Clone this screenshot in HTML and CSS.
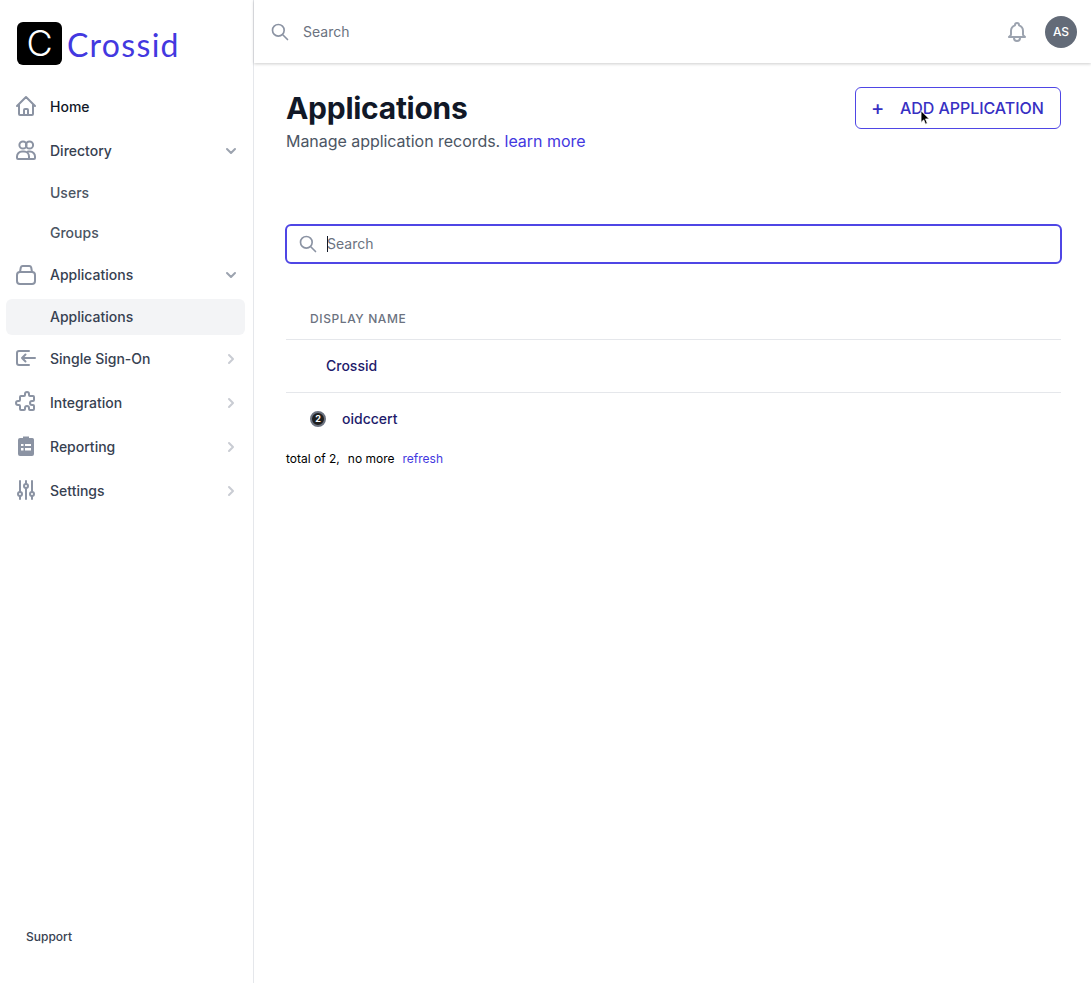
FILE: index.html
```html
<!DOCTYPE html>
<html lang="en">

<head>
    <meta charset="UTF-8">
    <meta name="viewport" content="width=device-width, initial-scale=1.0">
    <title>Applications</title>
    <link rel="stylesheet" href="styles.css">
</head>

<body>
    <!-- Sidebar -->
    <aside class="sidebar">
        <div class="brand">
            <div class="brand-mark">C</div>
            <div class="brand-name">Crossid</div>
        </div>

        <nav class="nav">
            <a class="nav-item active">
                <svg class="nav-icon" viewBox="0 0 24 24"><path d="M3 12l2-2m0 0l7-7 7 7M5 10v10a1 1 0 001 1h3m10-11l2 2m-2-2v10a1 1 0 01-1 1h-3m-6 0a1 1 0 001-1v-4a1 1 0 011-1h2a1 1 0 011 1v4a1 1 0 001 1m-6 0h6"/></svg>
                Home
            </a>
            <a class="nav-item">
                <svg class="nav-icon" viewBox="0 0 24 24"><circle cx="9" cy="7" r="3.6"/><circle cx="15.5" cy="7" r="3.6"/><path d="M3 20v-1.500a5 5 0 015-5h2a5 5 0 015 5V20a1 1 0 01-1 1H4a1 1 0 01-1-1zM14 13.500h2a5 5 0 015 5V20a1 1 0 01-1 1h-6"/></svg>
                Directory
                <svg class="chevron" viewBox="0 0 20 20"><path d="M6 8l4 4 4-4"/></svg>
            </a>
            <a class="nav-sub">Users</a>
            <a class="nav-sub">Groups</a>
            <a class="nav-item">
                <svg class="nav-icon" viewBox="0 0 24 24"><path d="M6 10l.8-4.500A2 2 0 018.800 4h6.400a2 2 0 012 1.500L18 10"/><path d="M3 13a3 3 0 013-3h12a3 3 0 013 3v6a3 3 0 01-3 3H6a3 3 0 01-3-3z"/></svg>
                Applications
                <svg class="chevron" viewBox="0 0 20 20"><path d="M6 8l4 4 4-4"/></svg>
            </a>
            <a class="nav-sub current">Applications</a>
            <a class="nav-item">
                <svg class="nav-icon" viewBox="0 0 24 24"><path d="M21 12H8m0 0l3.500-3.500M8 12l3.500 3.500M15 5H5a2 2 0 00-2 2v10a2 2 0 002 2h10"/></svg>
                Single Sign-On
                <svg class="chevron closed" viewBox="0 0 20 20"><path d="M8 6l4 4-4 4"/></svg>
            </a>
            <a class="nav-item">
                <svg class="nav-icon" viewBox="0 0 24 24"><path d="M11 4a2 2 0 114 0v1a1 1 0 001 1h3a1 1 0 011 1v3a1 1 0 01-1 1h-1a2 2 0 100 4h1a1 1 0 011 1v3a1 1 0 01-1 1h-3a1 1 0 01-1-1v-1a2 2 0 10-4 0v1a1 1 0 01-1 1H7a1 1 0 01-1-1v-3a1 1 0 00-1-1H4a2 2 0 110-4h1a1 1 0 001-1V7a1 1 0 011-1h3a1 1 0 001-1V4z"/></svg>
                Integration
                <svg class="chevron closed" viewBox="0 0 20 20"><path d="M8 6l4 4-4 4"/></svg>
            </a>
            <a class="nav-item">
                <svg class="nav-icon solid" viewBox="0 0 24 24"><path fill-rule="evenodd" d="M9 2.500h6V4h2.500A2 2 0 0120 6v14a2 2 0 01-2 2H6a2 2 0 01-2-2V6a2 2 0 012-2h3zM7 10v2h2.500v-2zM11 10v2h6v-2zM7 14v2.500h2.500V14zM11 14v2.500h6V14z"/></svg>
                Reporting
                <svg class="chevron closed" viewBox="0 0 20 20"><path d="M8 6l4 4-4 4"/></svg>
            </a>
            <a class="nav-item">
                <svg class="nav-icon" viewBox="0 0 24 24"><path d="M6 3v11M6 18v3M12 3v3M12 10v11M18 3v11M18 18v3"/><circle cx="6" cy="16" r="2"/><circle cx="12" cy="8" r="2"/><circle cx="18" cy="16" r="2"/></svg>
                Settings
                <svg class="chevron closed" viewBox="0 0 20 20"><path d="M8 6l4 4-4 4"/></svg>
            </a>
        </nav>

        <a class="support">Support</a>
    </aside>

    <div class="page">
        <!-- Top bar -->
        <header class="topbar">
            <svg class="search-icon" viewBox="0 0 24 24"><path d="M21 21l-6-6m2-5a7 7 0 11-14 0 7 7 0 0114 0z"/></svg>
            <span class="topbar-search">Search</span>
            <svg class="bell" viewBox="0 0 24 24"><path d="M15 17h5l-1.405-1.405A2.032 2.032 0 0118 14.158V11a6.002 6.002 0 00-4-5.659V5a2 2 0 10-4 0v.341C7.67 6.165 6 8.388 6 11v3.159c0 .538-.214 1.055-.595 1.436L4 17h5m6 0v1a3 3 0 11-6 0v-1m6 0H9"/></svg>
            <div class="avatar">AS</div>
        </header>

        <main class="content">
            <div class="heading">
                <div>
                    <h1>Applications</h1>
                    <p class="subtitle">Manage application records. <a class="link">learn more</a></p>
                </div>
                <button class="add-btn"><span class="plus">+</span>ADD APPLICATION</button>
            </div>

            <div class="table-search">
                <svg class="search-icon" viewBox="0 0 24 24"><path d="M21 21l-6-6m2-5a7 7 0 11-14 0 7 7 0 0114 0z"/></svg>
                <span class="caret"></span>
                <span class="table-search-text">Search</span>
            </div>

            <div class="table">
                <div class="table-head">Display Name</div>
                <div class="table-row">
                    <span></span>
                    Crossid
                </div>
                <div class="table-row">
                    <span class="app-icon">2</span>
                    oidccert
                </div>
            </div>

            <div class="table-foot">
                <span>total of 2,</span>
                <span>no more</span>
                <a class="link">refresh</a>
            </div>
        </main>
    </div>

    <!-- Mouse pointer caught in the screenshot -->
    <svg class="pointer" viewBox="0 0 12 18"><path d="M1 1v13l3-3 2 5 2-1-2-5h4z"/></svg>
</body>

</html>
```

FILE: styles.css
```css
* {
    box-sizing: border-box;
}

body {
    margin: 0;
    height: 983px;
    display: flex;
    overflow: hidden;
    font-family: Inter, "Liberation Sans", sans-serif;
    font-size: 14px;
    color: #374151;
    background: white;
}

svg {
    fill: none;
    stroke-linecap: round;
    stroke-linejoin: round;
    flex-shrink: 0;
}

.link {
    color: #4338e0;
}

/* Sidebar */
.sidebar {
    width: 254px;
    flex-shrink: 0;
    display: flex;
    flex-direction: column;
    border-right: 1px solid #e5e7eb;
}

.brand {
    height: 87px;
    padding: 22px 0 0 17px;
    display: flex;
    align-items: flex-start;
}

.brand-mark {
    width: 45px;
    height: 43px;
    border-radius: 6px;
    background: black;
    color: white;
    font-size: 36px;
    font-weight: 300;
    line-height: 43px;
    text-align: center;
}

.brand-name {
    margin-left: 5px;
    font-family: Lato, sans-serif;
    font-size: 32px;
    line-height: 45px;
    letter-spacing: 1.3px;
    color: #4338e0;
}

.nav {
    display: flex;
    flex-direction: column;
    gap: 4px;
    padding: 0 8px 0 6px;
}

.nav-item {
    height: 40px;
    padding: 0 0 2px 8px;
    display: flex;
    align-items: center;
    font-weight: 500;
    color: #374151;
}

.nav-item.active {
    color: #111827;
}

.nav-icon {
    width: 24px;
    height: 24px;
    margin-right: 12px;
    stroke: #8b93a3;
    stroke-width: 2;
}

.nav-icon.solid {
    fill: #8b93a3;
    stroke: none;
}

.chevron {
    width: 20px;
    height: 20px;
    margin: 2px 4px 0 auto;
    stroke: #9ca3af;
    stroke-width: 2;
}

.chevron.closed {
    stroke: #c9ccd3;
}

.nav-sub {
    height: 36px;
    padding: 0 0 2px 44px;
    display: flex;
    align-items: center;
    border-radius: 6px;
    font-weight: 500;
    color: #4b5563;
}

.nav-sub.current {
    background: #f3f4f6;
    color: #374151;
}

.support {
    margin-top: auto;
    margin-bottom: 38px;
    padding-left: 26px;
    font-size: 12px;
    line-height: 16px;
    font-weight: 500;
}

/* Top bar */
.page {
    flex: 1;
    min-width: 0;
}

.topbar {
    height: 63px;
    padding: 0 14px 0 16px;
    display: flex;
    align-items: center;
    box-shadow: 0 1px 3px rgba(0, 0, 0, 0.2);
}

.search-icon {
    width: 20px;
    height: 20px;
    stroke: #8b93a3;
    stroke-width: 2;
}

.topbar-search {
    margin-left: 13px;
    color: #6b7280;
}

.bell {
    width: 24px;
    height: 24px;
    margin-left: auto;
    stroke: #9ca3af;
    stroke-width: 2;
}

.avatar {
    width: 32px;
    height: 32px;
    margin-left: 16px;
    border-radius: 50%;
    background: #636b78;
    color: white;
    font-size: 12px;
    font-weight: 500;
    line-height: 32px;
    text-align: center;
}

/* Main */
.content {
    padding: 24px 30px 0 32px;
}

.heading {
    display: flex;
    justify-content: space-between;
    align-items: flex-start;
    height: 137px;
}

h1 {
    margin: 3px 0 0;
    font-size: 30px;
    line-height: 36px;
    font-weight: 700;
    letter-spacing: -0.28px;
    color: #111827;
}

.subtitle {
    margin: 3px 0 0;
    font-size: 16px;
    line-height: 24px;
    letter-spacing: -0.04px;
    color: #4b5563;
}

.add-btn {
    width: 206px;
    height: 42px;
    padding: 0 0 0 15px;
    display: flex;
    align-items: center;
    background: white;
    border: 1px solid #4f46e5;
    border-radius: 6px;
    font-family: inherit;
    font-size: 16px;
    font-weight: 500;
    letter-spacing: -0.05px;
    color: #3730c3;
}

.plus {
    width: 29px;
    font-size: 20px;
    font-weight: 500;
    text-align: left;
}

.table-search {
    position: relative;
    height: 40px;
    margin: 0 -1px;
    padding-left: 11px;
    display: flex;
    align-items: center;
    border: 2px solid #4f46e5;
    border-radius: 6px;
}

.table-search-text {
    margin: 0 0 2px 9px;
    color: #6b7280;
}

/* Text cursor sitting in the focused field */
.caret {
    position: absolute;
    left: 40px;
    top: 10px;
    width: 1px;
    height: 16px;
    background: #111827;
}

.table {
    margin-top: 34px;
}

.table-head {
    height: 42px;
    padding-left: 24px;
    display: flex;
    align-items: center;
    border-bottom: 1px solid #e5e7eb;
    font-size: 12px;
    font-weight: 500;
    letter-spacing: 0.05em;
    text-transform: uppercase;
    color: #6b7280;
}

.table-row {
    height: 52px;
    padding: 0 0 2px 24px;
    display: flex;
    align-items: center;
    gap: 16px;
    font-weight: 500;
    color: #1e1b6b;
}

.table-row + .table-row {
    height: 53px;
    border-top: 1px solid #e5e7eb;
}

.app-icon {
    width: 16px;
    height: 16px;
    margin-top: 2px;
    border-radius: 50%;
    border: 2px solid #6b7280;
    background: #1f1f1f;
    color: white;
    font-size: 9px;
    font-weight: 700;
    line-height: 12px;
    text-align: center;
}

.table-foot {
    display: flex;
    gap: 8px;
    margin-top: 6px;
    font-size: 12px;
    line-height: 16px;
    color: black;
}

.pointer {
    position: absolute;
    left: 920px;
    top: 110px;
    width: 11px;
    height: 16px;
    fill: black;
    stroke: white;
    stroke-width: 0.8;
}
```
